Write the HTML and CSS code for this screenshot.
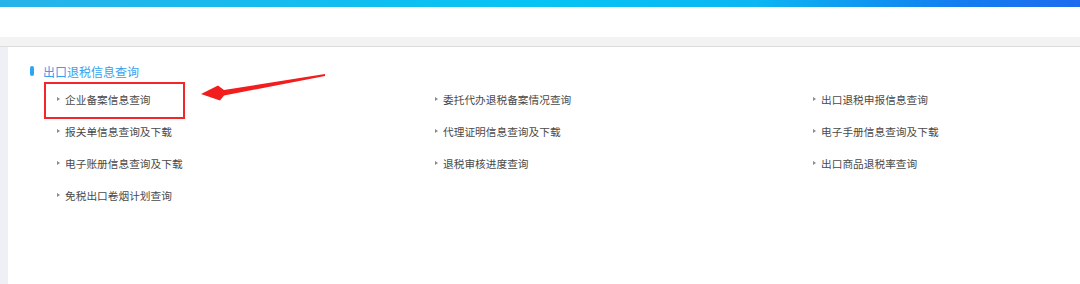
FILE: index.html
```html
<!DOCTYPE html>
<html lang="zh-CN">
<head>
    <meta charset="UTF-8">
    <meta name="viewport" content="width=device-width, initial-scale=1.0">
    <title>出口退税信息查询</title>
    <link rel="stylesheet" href="styles.css">
</head>
<body>
    <div class="topbar"></div>
    <div class="spacer"></div>
    <div class="band"></div>

    <div class="page">
        <div class="side"></div>
        <div class="panel">
            <h2 class="title"><span class="title-mark"></span>出口退税信息查询</h2>
            <ul class="links">
                <li><span class="dot"></span>企业备案信息查询</li>
                <li><span class="dot"></span>委托代办退税备案情况查询</li>
                <li><span class="dot"></span>出口退税申报信息查询</li>
                <li><span class="dot"></span>报关单信息查询及下载</li>
                <li><span class="dot"></span>代理证明信息查询及下载</li>
                <li><span class="dot"></span>电子手册信息查询及下载</li>
                <li><span class="dot"></span>电子账册信息查询及下载</li>
                <li><span class="dot"></span>退税审核进度查询</li>
                <li><span class="dot"></span>出口商品退税率查询</li>
                <li><span class="dot"></span>免税出口卷烟计划查询</li>
            </ul>

            <!-- annotation drawn over the page -->
            <div class="mark-box"></div>
        </div>
    </div>

    <svg class="arrow" width="140" height="40" viewBox="195 70 140 40">
        <polygon points="325,74 224,90 218,85.5 201,94 220,100.5 224,95.5 325,76" fill="#f21d1d"/>
    </svg>
</body>
</html>
```

FILE: styles.css
```css
body {
    margin: 0;
    background: #fff;
    font-family: "Noto Sans CJK SC", "Liberation Sans", sans-serif;
    height: 284px;
    overflow: hidden;
    position: relative;
}

.topbar {
    height: 7px;
    background: linear-gradient(to right, #27b3ea 0%, #12bdf0 30%, #06c4f4 50%, #0bb6f2 70%, #137ff0 88%, #1e6bef 100%);
}

.spacer {
    height: 30px;
}

.band {
    height: 9px;
    background: #f3f3f4;
    border-bottom: 1px solid #dcdcdc;
}

.page {
    display: flex;
    height: 237px;
}

.side {
    width: 8px;
    background: #efeff6;
}

.panel {
    flex: 1;
    position: relative;
    padding: 14px 0 0 22px;
}

.title {
    display: flex;
    align-items: center;
    height: 20px;
    margin: 0;
    font-size: 12px;
    font-weight: normal;
    color: #35a2ee;
}

.title-mark {
    width: 4px;
    height: 10px;
    border-radius: 2px;
    background: #2ca6f2;
    margin-right: 9px;
}

.links {
    list-style: none;
    margin: 2px 0 0 0;
    padding: 0 0 0 27px;
    display: grid;
    grid-template-columns: 378px 378px 1fr;
    grid-auto-rows: 32px;
}

.links li {
    display: flex;
    align-items: center;
    font-size: 10.7px;
    color: #4a4a4a;
}

.dot {
    width: 0;
    height: 0;
    border-top: 2.5px solid transparent;
    border-bottom: 2.5px solid transparent;
    border-left: 3px solid #8a8a8a;
    margin-right: 5px;
}

.mark-box {
    position: absolute;
    left: 36px;
    top: 35px;
    width: 137px;
    height: 33px;
    border: 2px solid #f3262a;
}

.arrow {
    position: absolute;
    left: 195px;
    top: 70px;
}
```
